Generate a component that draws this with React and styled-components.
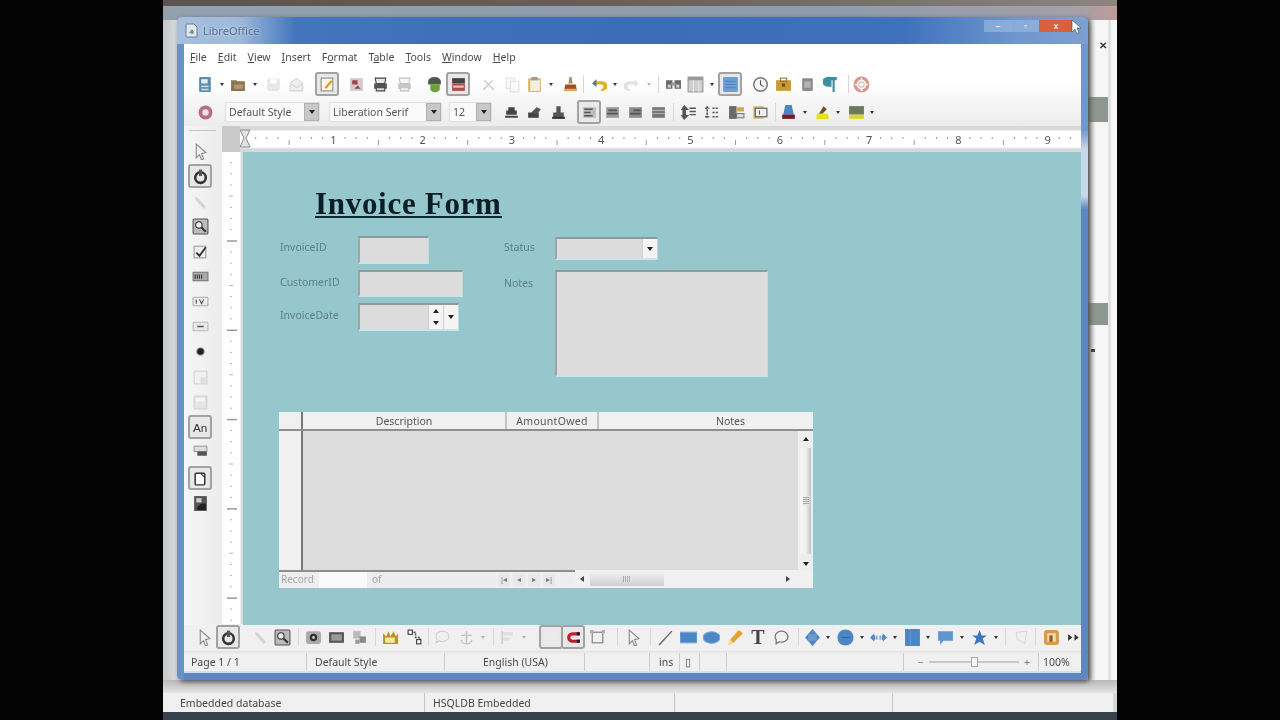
import React from "react";
import styled, { createGlobalStyle, css } from "styled-components";

const Global = createGlobalStyle`
  html, body { margin: 0; padding: 0; background: #000; }
  body { font-family: "Noto Sans", "Liberation Sans", sans-serif; overflow: hidden; }
`;

const Desktop = styled.div`
  width: 1280px;
  height: 720px;
  background: #030303;
  padding-left: 163px;
  box-sizing: border-box;
  filter: blur(0.7px);
  overflow: hidden;
`;

const BackWindow = styled.div`
  position: relative;
  width: 954px;
  height: 720px;
  display: flex;
  flex-direction: column;
  background: #d4d6d8;
`;
const BackTopStrip = styled.div`
  height: 6px;
  background: linear-gradient(90deg, #5b5350, #6a6058 50%, #77716c 75%, #8d8480);
`;
const BackTitle = styled.div`
  height: 14px;
  background: linear-gradient(90deg, #93a0ae, #8d9bad 70%, #a4a0a8 96%, #c09a98);
`;
const BackBody = styled.div`
  flex: 1;
  display: flex;
  justify-content: flex-end;
  background: linear-gradient(90deg, #c4c6c8, #dcdcdc 1.5%);
`;
const BackSide = styled.div`
  width: 29px;
  display: flex;
  flex-direction: column;
  background: linear-gradient(90deg, #9aa0a4 0, #d8d8d8 4px, #f6f6f6 8px, #f6f6f6 20px, #d8d8d8 21px, #f8f8f8 24px);
`;
const BackClose = styled.div`
  margin: 21px 0 0 11px;
  width: 9px;
  height: 9px;
  font: bold 10px/9px "Liberation Sans", sans-serif;
  color: #333;
`;
const BackBlock = styled.div`
  width: 20px;
  height: ${(p) => p.$h}px;
  margin-top: ${(p) => p.$top}px;
  background: #8e9690;
`;
const BackDot = styled.div`
  width: 4px;
  height: 3px;
  margin: 24px 0 0 3px;
  background: #444;
`;
const BackFooter = styled.div`
  height: 13px;
  background: linear-gradient(180deg, #b8b8b8, #e4e4e4);
`;
const BackStatus = styled.div`
  height: 19px;
  margin-right: 4px;
  display: flex;
  background: #f0f0f0;
  font-size: 10.5px;
  line-height: 21px;
  color: #444;
`;
const BackCell = styled.div`
  width: ${(p) => p.$w}px;
  padding-left: ${(p) => p.$pad || 0}px;
  box-sizing: border-box;
  border-right: 1px solid #c4c4c4;
`;
const BackBottom = styled.div`
  height: 8px;
  background: #37414c;
`;

const MainWindow = styled.div`
  position: absolute;
  left: 14px;
  top: 17px;
  width: 911px;
  height: 663px;
  box-sizing: border-box;
  padding: 0 7px 7px;
  display: flex;
  flex-direction: column;
  background: linear-gradient(90deg, #6a90c6 0, #6a90c6 7px, transparent 7px),
    linear-gradient(180deg, #7098d0 0, #7098d0 17%, #c8d8ea 20%, #c8d8ea 27%, #5d87bf 29%);
  border-radius: 5px;
  box-shadow: 2px 2px 5px rgba(30, 30, 30, 0.65);
`;
const TitleBar = styled.div`
  height: 27px;
  margin: 0 -7px;
  padding: 0 8px;
  display: flex;
  align-items: center;
  border-radius: 5px 5px 0 0;
  background: linear-gradient(90deg, #a7c0de 0, #9db9da 7%, #4375bd 13%, #3a6cb8 50%, #3f72bd 80%, #6f96ce 92%, #7da0d3 100%);
`;
const AppLogo = styled.svg`
  width: 13px;
  height: 15px;
  flex: none;
`;
const TitleText = styled.span`
  margin-left: 5px;
  font-size: 11px;
  color: #55708e;
  text-shadow: 0 0 3px #d8e6f4;
`;
const WinButtons = styled.div`
  margin-left: auto;
  margin-right: 7px;
  display: flex;
  height: 12px;
  align-self: flex-start;
  margin-top: 3px;
`;
const WinBtn = styled.div`
  width: ${(p) => p.$w}px;
  display: flex;
  align-items: center;
  justify-content: center;
  color: #f0f4f8;
  font: bold 9px "Liberation Sans", sans-serif;
  background: ${(p) => p.$bg};
`;
const Cursor = styled.svg`
  position: absolute;
  right: 6px;
  top: 2px;
  width: 11px;
  height: 16px;
`;

const Client = styled.div`
  flex: 1;
  display: flex;
  flex-direction: column;
  min-height: 0;
  background: #f0f0f0;
`;
const Header = styled.div`
  background: linear-gradient(180deg, #ffffff 0, #ffffff 45%, #ececec 100%);
`;
const MenuBar = styled.div`
  height: 26px;
  display: flex;
  align-items: center;
  padding-left: 6px;
  gap: 11px;
  font-size: 10.5px;
  color: #4a4a4a;
`;
const MenuItem = styled.span`
  u { text-underline-offset: 1px; }
`;
const ToolRow = styled.div`
  height: 28px;
  display: flex;
  align-items: center;
`;
const Tool = styled.span`
  flex: none;
  box-sizing: border-box;
  width: ${(p) => p.$w}px;
  height: 24px;
  margin-left: ${(p) => p.$gap}px;
  display: flex;
  align-items: center;
  justify-content: center;
  opacity: ${(p) => (p.$off ? 0.32 : 1)};
  ${(p) =>
    p.$on &&
    css`
      border: 2px solid #a2a2a2;
      border-radius: 3px;
      background: #e8e8e8;
    `}
`;
const Icon = styled.svg`
  width: 17px;
  height: 17px;
  display: block;
`;
const BigT = styled.span`
  font: bold 20px/20px "Liberation Serif", serif;
  color: #444;
`;
const Drop = styled.span`
  width: 0;
  height: 0;
  border-left: 2.5px solid transparent;
  border-right: 2.5px solid transparent;
  border-top: 3px solid #333;
`;
const Sep = styled.span`
  width: 1px;
  height: 18px;
  background: #d8d8d8;
`;
const Combo = styled.span`
  flex: none;
  box-sizing: border-box;
  width: ${(p) => p.$w}px;
  height: 20px;
  margin-left: ${(p) => p.$gap}px;
  display: flex;
  align-items: center;
  background: #fafafa;
  border: 1px solid #e0e0e0;
  font-size: 10.5px;
  color: #555;
`;
const ComboText = styled.span`
  flex: 1;
  padding-left: 3px;
  white-space: nowrap;
`;
const ComboArrow = styled.span`
  width: 15px;
  height: 18px;
  flex: none;
  display: flex;
  align-items: center;
  justify-content: center;
  background: #c8c8c8;
  border: 1px solid #b0b0b0;
  box-sizing: border-box;
`;
const ArrowDown = styled.span`
  width: 0;
  height: 0;
  border-left: 3px solid transparent;
  border-right: 3px solid transparent;
  border-top: 4px solid #222;
`;

const Workspace = styled.div`
  flex: 1;
  min-height: 0;
  display: flex;
`;
const SideBar = styled.div`
  width: 38px;
  flex: none;
  box-sizing: border-box;
  display: flex;
  flex-direction: column;
  align-items: flex-start;
  background: linear-gradient(90deg, #f6f6f6, #ececec);
`;
const SideGrip = styled.div`
  width: 27px;
  height: 1px;
  flex: none;
  margin: 4px 0 0 5px;
  background: #c4c4c4;
`;
const SideTool = styled(Tool)`
  margin-left: 4px;
  margin-top: ${(p) => p.$gap}px;
`;
const DocArea = styled.div`
  flex: 1;
  min-width: 0;
  display: flex;
  flex-direction: column;
`;
const RulerRow = styled.div`
  height: 26px;
  flex: none;
  display: flex;
  background: linear-gradient(180deg, #dadada 0, #dadada 4px, #ffffff 5px, #ffffff 21px, #d4dada 23px);
`;
const RulerCorner = styled.div`
  width: 18px;
  flex: none;
  background: #c9c9c9;
`;
const RulerSvg = styled.svg`
  flex: 1;
  min-width: 0;
  height: 26px;
  display: block;
`;
const Middle = styled.div`
  flex: 1;
  min-height: 0;
  display: flex;
`;
const VRuler = styled.svg`
  width: 21px;
  flex: none;
  height: 472px;
  display: block;
  background: linear-gradient(90deg, #ffffff 0, #ffffff 18px, #d8dcdc 19px);
`;
const Canvas = styled.div`
  position: relative;
  flex: 1;
  background: #96c7cd;
  overflow: hidden;
`;
const FormTitle = styled.div`
  position: absolute;
  left: 72px;
  top: 33px;
  height: 31px;
  font: bold 31px/38px "Liberation Serif", serif;
  letter-spacing: 0.7px;
  color: #0a1e26;
  white-space: nowrap;
  border-bottom: 2px solid #0a2a33;
`;
const FieldLabel = styled.span`
  position: absolute;
  left: ${(p) => p.$x}px;
  top: ${(p) => p.$y}px;
  font-size: 10.5px;
  line-height: 14px;
  color: #5d7f89;
`;
const Field = styled.div`
  position: absolute;
  left: ${(p) => p.$x}px;
  top: ${(p) => p.$y}px;
  width: ${(p) => p.$w}px;
  height: ${(p) => p.$h}px;
  box-sizing: border-box;
  display: flex;
  justify-content: flex-end;
  background: #dcdcdc;
  border-top: 2px solid #8f9a9c;
  border-left: 2px solid #9aa6a8;
  border-bottom: 2px solid #c8e6e8;
  border-right: 1px solid #c0dcde;
`;
const FieldBtn = styled.div`
  width: 14px;
  display: flex;
  flex-direction: column;
  align-items: center;
  justify-content: ${(p) => (p.$spin ? "space-around" : "center")};
  background: #f4f4f4;
  border-left: 1px solid #d0d0d0;
`;
const ArrowUp = styled.span`
  width: 0;
  height: 0;
  border-left: 3px solid transparent;
  border-right: 3px solid transparent;
  border-bottom: 4px solid #222;
`;

const Table = styled.div`
  position: absolute;
  left: 36px;
  top: 260px;
  width: 534px;
  height: 176px;
  display: flex;
  flex-direction: column;
  background: #eeeeee;
  font-size: 10.5px;
  color: #555;
`;
const TableHead = styled.div`
  height: 19px;
  flex: none;
  display: flex;
  box-sizing: border-box;
  border-bottom: 2px solid #8e8e8e;
  background: #f0f0f0;
`;
const HeadCell = styled.div`
  width: ${(p) => p.$w}px;
  flex: none;
  box-sizing: border-box;
  padding-left: ${(p) => p.$pad || 0}px;
  text-align: center;
  line-height: 19px;
  letter-spacing: ${(p) => p.$track || 0}px;
  border-right: ${(p) => (p.$last ? "none" : p.$dark ? "2px solid #777" : "2px solid #c4c4c4")};
`;
const TableMain = styled.div`
  flex: 1;
  display: flex;
  min-height: 0;
`;
const RowHeads = styled.div`
  width: 24px;
  flex: none;
  box-sizing: border-box;
  background: #f0f0f0;
  border-right: 2px solid #777;
`;
const TableBody = styled.div`
  flex: 1;
  background: #dddddd;
`;
const VScroll = styled.div`
  width: 15px;
  flex: none;
  display: flex;
  flex-direction: column;
  align-items: center;
  background: #eeeeee;
`;
const ScrollBtn = styled.div`
  height: 15px;
  width: 15px;
  flex: none;
  display: flex;
  align-items: center;
  justify-content: center;
`;
const VThumb = styled.div`
  flex: 1;
  width: 11px;
  margin: 2px 0;
  display: flex;
  align-items: center;
  justify-content: center;
  background: linear-gradient(90deg, #f6f6f6, #f0f0f0 50%, #c4c4c4);
`;
const Grip = styled.div`
  width: ${(p) => p.$w}px;
  height: ${(p) => p.$h}px;
  background: repeating-linear-gradient(${(p) => p.$dir}, #a8a8a8 0 1px, #e8e8e8 1px 2px);
`;
const TableFoot = styled.div`
  height: 16px;
  flex: none;
  display: flex;
  align-items: stretch;
  border-top: 2px solid #8e8e8e;
  margin-top: -1px;
  background: #eeeeee;
`;
const FootText = styled.span`
  width: ${(p) => p.$w}px;
  flex: none;
  padding-left: 2px;
  box-sizing: border-box;
  line-height: 15px;
  color: #a6a6a6;
  font-size: 10px;
  background: ${(p) => p.$bg || "transparent"};
`;
const FootInput = styled.span`
  width: 48px;
  flex: none;
  background: #fafafa;
  margin: 0 3px;
`;
const NavBtns = styled.div`
  width: 79px;
  flex: none;
  display: flex;
  padding-left: 2px;
  gap: 3px;
  box-sizing: border-box;
  align-items: center;
`;
const NavBtn = styled.span`
  width: 12px;
  height: 12px;
  font: 8px/12px "Liberation Sans", sans-serif;
  text-align: center;
  color: #777;
  background: #e8e8e8;
`;
const HScroll = styled.div`
  flex: 1;
  display: flex;
  align-items: center;
  margin-top: -2px;
  background: #f0f0f0;
`;
const HArrow = styled.span`
  width: 0;
  height: 0;
  flex: none;
  margin: ${(p) => p.$m};
  border-top: 3px solid transparent;
  border-bottom: 3px solid transparent;
  ${(p) => (p.$left ? "border-right: 4px solid #444;" : "border-left: 4px solid #444;")}
`;
const HThumb = styled.div`
  width: 74px;
  height: 13px;
  flex: none;
  display: flex;
  align-items: center;
  justify-content: center;
  background: linear-gradient(180deg, #efefef, #cfcfcf);
`;

const BottomBar = styled.div`
  height: 26px;
  flex: none;
  box-sizing: border-box;
  padding-bottom: 2px;
  display: flex;
  align-items: center;
  background: #f0f0f0;
  overflow: hidden;
`;
const StatusBar = styled.div`
  height: 22px;
  flex: none;
  display: flex;
  align-items: center;
  box-sizing: border-box;
  background: linear-gradient(180deg, #e0e0e0 0, #f0f0f0 3px, #f0f0f0 20px, #d0dff0 20px);
  font-size: 10.5px;
  color: #4a4a4a;
`;
const StatusCell = styled.div`
  width: ${(p) => p.$w}px;
  height: 18px;
  flex: none;
  box-sizing: border-box;
  line-height: 18px;
  padding-left: ${(p) => p.$pad || 0}px;
  border-right: ${(p) => (p.$last ? "none" : "1px solid #cccccc")};
  white-space: nowrap;
`;
const Zoomer = styled.div`
  width: 135px;
  height: 18px;
  flex: none;
  display: flex;
  align-items: center;
  box-sizing: border-box;
  padding-left: 14px;
  gap: 5px;
  color: #777;
  border-right: 1px solid #cccccc;
`;
const SliderTrack = styled.div`
  width: 90px;
  height: 2px;
  flex: none;
  display: flex;
  align-items: center;
  justify-content: center;
  background: #c8c8c8;
`;
const SliderKnob = styled.div`
  width: 5px;
  height: 8px;
  background: #f4f4f4;
  border: 1px solid #a8a8a8;
`;

const S = ({ children }) => (
  <Icon viewBox="0 0 16 16" aria-hidden="true">
    {children}
  </Icon>
);

const GLYPHS = {
  doc: <><rect x="2" y="1" width="11" height="14" rx="1" fill="#5d8cad" /><rect x="4" y="3" width="6" height="4" fill="#e8f0f4" /><rect x="4" y="9" width="7" height="1.5" fill="#c7dbe6" /><rect x="4" y="12" width="7" height="1.5" fill="#c7dbe6" /></>,
  folder: <><path d="M1 4h5l1 1h7v9H1z" fill="#8f7450" /><rect x="4" y="8" width="8" height="4" fill="#b49a6e" /></>,
  save: <><rect x="2" y="2" width="12" height="12" rx="2" fill="#bcbcbc" /><rect x="5" y="3" width="6" height="4" fill="#fff" /></>,
  mail: <><path d="M2 7l6-5 6 5v7H2z" fill="#d0d0d0" stroke="#888" /><path d="M2 7l6 4 6-4" fill="none" stroke="#888" /></>,
  edit: <><rect x="2" y="2" width="11" height="12" fill="#fbf6e6" stroke="#888" /><path d="M5 11l6-7 2 1-6 7z" fill="#e09a28" /></>,
  pdf: <><rect x="2" y="2" width="12" height="12" fill="#d8c8cc" /><rect x="4" y="4" width="5" height="4" fill="#a04050" /><path d="M6 12l3-3 3 3z" fill="#8a4a58" /></>,
  print: <><path d="M3 2h10l-1 5H4z" fill="#e8e8e8" stroke="#444" /><path d="M2 7h12v5H2z" fill="#555" /><path d="M4 11h8v3H4z" fill="#ddd" stroke="#444" /></>,
  spell: <><path d="M2 5a6 4 0 0 1 12 0v3H2z" fill="#4a5a44" /><path d="M4 8h9v4a4 3 0 0 1-9 0z" fill="#6ea03a" /></>,
  book: <><rect x="2" y="2" width="12" height="5" fill="#444" /><rect x="2" y="7" width="12" height="7" fill="#b2494a" /><rect x="3" y="9" width="10" height="2" fill="#e8c8c8" /></>,
  cut: <><path d="M3 13l9-9M13 13L4 4" stroke="#777" strokeWidth="1.6" fill="none" /></>,
  copy: <><rect x="2" y="2" width="8" height="10" fill="#eee" stroke="#aaa" /><rect x="6" y="5" width="8" height="10" fill="#f4f4f4" stroke="#aaa" /></>,
  paste: <><rect x="2" y="2" width="12" height="13" rx="1" fill="#d8b860" /><rect x="4" y="4" width="9" height="10" fill="#f4efe0" /><rect x="5" y="1" width="6" height="3" fill="#999" /></>,
  brush: <><path d="M7 1h2l1 6H6z" fill="#b08860" /><path d="M3 8h10l1 6H2z" fill="#9a5028" /><rect x="2" y="12" width="12" height="2" fill="#e8b050" /></>,
  undo: <><path d="M6 3L2 7l4 3V8h4a2 2 0 0 1 1 4l-1 2a5 4 0 0 0 2-9H6z" fill="#e0b020" /><path d="M6 3L2 7l4 3" fill="#4a78b0" /></>,
  redo: <path d="M10 3l4 4-4 3V8H6a2 2 0 0 0-1 4l1 2a5 4 0 0 1-2-9h6z" fill="#aaa" />,
  find: <><rect x="1" y="4" width="6" height="8" fill="#666" /><rect x="9" y="4" width="6" height="8" fill="#666" /><rect x="6" y="6" width="4" height="3" fill="#999" /><rect x="2.5" y="8" width="3" height="3" fill="#ccd" /><rect x="10.5" y="8" width="3" height="3" fill="#ccd" /></>,
  table: <><rect x="1" y="1" width="14" height="14" fill="#cfcfcf" stroke="#999" /><rect x="1" y="1" width="14" height="3" fill="#999" /><path d="M6 4v11M11 4v11" stroke="#e8e8e8" /></>,
  formbox: <><rect x="1" y="1" width="14" height="14" rx="1" fill="#6d9fd6" /><path d="M3 5h10M3 8h10M3 11h10" stroke="#4a7db8" strokeWidth="0.8" /></>,
  clock: <><circle cx="8" cy="8" r="6.4" fill="#f4f4f4" stroke="#777" strokeWidth="1.4" /><path d="M8 4v4l3 2" stroke="#555" fill="none" /></>,
  case: <><rect x="1" y="4" width="14" height="10" fill="#c89a38" /><rect x="5" y="2" width="6" height="3" fill="none" stroke="#96742a" /><rect x="6.5" y="7" width="3" height="3" fill="#6a4f18" /></>,
  cube: <><rect x="3" y="2" width="10" height="12" rx="1" fill="#8c8c8c" /><rect x="5" y="5" width="6" height="6" fill="#b4b4b4" /></>,
  pilcrow: <><path d="M4 1h9v3h-2v11H9V4H8v6H6a5 4 0 0 1-2-9z" fill="#3b8ea8" /></>,
  help: <><circle cx="8" cy="8" r="6" fill="#fff" stroke="#d89890" strokeWidth="3" /><path d="M8 2v3M8 11v3M2 8h3M11 8h3" stroke="#fff" strokeWidth="1.6" /><circle cx="8" cy="8" r="2.5" fill="#fff" stroke="#e0b8b0" /></>,
  navi: <><circle cx="8" cy="8" r="6.5" fill="#b56e80" /><circle cx="8" cy="8" r="3" fill="#f0e0e4" /></>,
  bold1: <><path d="M2 13h12v-2H2zM3 10h10V6h-2V3H5v3H3z" fill="#444" /></>,
  bold2: <><path d="M2 13h10V8H2z" fill="#444" /><path d="M5 8l5-5 4 2-4 5z" fill="#555" /></>,
  bold3: <><path d="M6 2h4v6h3v5H3V8h3z" fill="#555" /><rect x="2" y="12" width="12" height="2" fill="#333" /></>,
  alL: <><rect x="2" y="3" width="12" height="10" fill="#bcbcbc" /><path d="M3 5h8M3 8h6M3 11h8" stroke="#555" strokeWidth="1.4" /></>,
  alC: <><rect x="2" y="3" width="12" height="10" fill="#9a9a9a" /><path d="M4 6h8M3 9h10" stroke="#555" strokeWidth="1.6" /></>,
  alR: <><rect x="2" y="3" width="12" height="10" fill="#8c8c8c" /><path d="M6 6h7M3 9h10" stroke="#555" strokeWidth="1.6" /></>,
  alJ: <><rect x="2" y="3" width="12" height="10" fill="#777" /><path d="M2 6h12M2 9h12" stroke="#b0b0b0" /></>,
  ind1: <><path d="M3 2l3 3H4v6h2l-3 3-2-3h1V5H1zM8 4h6M8 7h6M8 10h6" stroke="#555" strokeWidth="1.4" fill="#555" /></>,
  ind2: <><path d="M3 2v12M1 4h4M1 12h4M8 4h6M8 8h6M8 12h6" stroke="#555" strokeWidth="1.6" strokeDasharray="2 1" fill="none" /></>,
  ind3: <><rect x="1" y="2" width="7" height="12" fill="#6a6a6a" /><rect x="8" y="3" width="7" height="4" fill="#c9a860" /><rect x="8" y="9" width="7" height="4" fill="#ddd" stroke="#777" /></>,
  ind4: <><rect x="2" y="2" width="10" height="12" fill="#d8c078" /><rect x="4" y="4" width="11" height="8" fill="#eee" stroke="#555" /><path d="M8 6v4" stroke="#555" /></>,
  fontColor: <><path d="M5 1h6l2 9H3z" fill="#4a86c0" /><rect x="2" y="10" width="12" height="4" fill="#7a1a2a" /></>,
  highlight: <><path d="M9 2l3 3-5 5H4z" fill="#6a5020" /><path d="M3 9l10 0 1 5H2z" fill="#e8e020" /></>,
  bgColor: <><rect x="1" y="2" width="14" height="8" fill="#6a7a5a" /><rect x="1" y="10" width="14" height="4" fill="#d8d830" /></>,
  arrow: <path d="M4 1l9 8-4 1 2 5-2 1-2-5-3 3z" fill="#f0f0f0" stroke="#888" />,
  hand: <><circle cx="8" cy="9" r="5" fill="none" stroke="#333" strokeWidth="2.4" /><rect x="6.5" y="1.5" width="3" height="6" fill="#555" /></>,
  wrench: <path d="M3 3l2 0 8 9-2 2-8-9z" fill="#999" />,
  zoom: <><rect x="1" y="1" width="14" height="14" rx="1" fill="#bbb" stroke="#555" /><circle cx="6.5" cy="6.5" r="3" fill="#eee" stroke="#333" /><path d="M9 9l4 4" stroke="#333" strokeWidth="2" /></>,
  check: <><rect x="2" y="3" width="11" height="11" fill="#eee" stroke="#999" /><path d="M4 9l3 3 6-8" stroke="#333" strokeWidth="1.8" fill="none" /></>,
  text: <><rect x="1" y="4" width="14" height="8" fill="#aaa" stroke="#777" /><path d="M3 6v4M5 6v4M7 6v4M9 6v4" stroke="#333" /></>,
  okBtn: <><rect x="1" y="4" width="14" height="8" rx="1" fill="#eee" stroke="#aaa" /><path d="M4 6v4M7 6l2 4 2-4" stroke="#444" fill="none" /></>,
  btn: <><rect x="1" y="4" width="14" height="8" rx="1" fill="#e8e8e8" stroke="#bbb" /><path d="M5 8h6" stroke="#555" strokeWidth="1.4" /></>,
  radio: <circle cx="8" cy="8" r="3.6" fill="#222" stroke="#aaa" />,
  panel: <><rect x="2" y="2" width="12" height="12" fill="#eee" stroke="#888" /><rect x="8" y="8" width="5" height="5" fill="#bbb" /></>,
  panel2: <><rect x="2" y="2" width="12" height="12" fill="#ccc" stroke="#888" /><rect x="4" y="4" width="8" height="3" fill="#fff" /></>,
  an: <text x="1" y="12" fontSize="11" fontFamily="Liberation Sans" fill="#333">An</text>,
  grid: <><rect x="2" y="3" width="12" height="5" fill="#ddd" stroke="#999" /><rect x="5" y="8" width="9" height="4" fill="#555" /></>,
  pageDoc: <><rect x="3" y="3" width="9" height="11" rx="1" fill="#fff" stroke="#333" strokeWidth="1.4" /><path d="M8 3l4 4" stroke="#333" /></>,
  darkDoc: <><rect x="2" y="1" width="12" height="14" fill="#555" /><rect x="4" y="3" width="5" height="4" fill="#ccc" /><path d="M9 8h4v6H5v-3z" fill="#222" /></>,
  gear: <><rect x="1" y="2" width="14" height="12" rx="2" fill="#aaa" /><circle cx="8" cy="8" r="3.5" fill="#333" /><circle cx="8" cy="8" r="1.4" fill="#ccc" /></>,
  screen: <><rect x="1" y="3" width="14" height="10" fill="#555" /><rect x="3" y="5" width="10" height="6" fill="#999" /></>,
  tiles: <><rect x="2" y="2" width="7" height="7" fill="#bbb" /><rect x="8" y="7" width="6" height="6" fill="#888" /><rect x="4" y="10" width="4" height="4" fill="#999" /></>,
  hat: <><path d="M1 14V4l3 3 2-5 2 5 3-5 2 5 2-3v10z" fill="#b8941c" /><rect x="3" y="8" width="9" height="5" fill="#f0e4a8" /></>,
  nodes: <><path d="M4 3h5v5h4v6" fill="none" stroke="#555" strokeDasharray="2 1" strokeWidth="1.4" /><rect x="2" y="1" width="4" height="4" fill="#fff" stroke="#333" /><rect x="10" y="10" width="4" height="4" fill="#fff" stroke="#333" /></>,
  bubble: <path d="M2 7a6 5 0 0 1 12 0 6 5 0 0 1-9 4l-3 2 1-3a5 5 0 0 1-1-3z" fill="none" stroke="#888" />,
  anchor: <path d="M8 2v12M3 6h10M3 10a5 4 0 0 0 10 0" fill="none" stroke="#666" strokeWidth="1.4" />,
  alignObj: <><path d="M3 2v12" stroke="#888" strokeWidth="1.5" /><rect x="4" y="3" width="9" height="3" fill="#bbb" /><rect x="4" y="8" width="6" height="3" fill="#bbb" /></>,
  blank: <rect x="1" y="1" width="14" height="14" fill="#eaeaea" />,
  magnet: <><path d="M14 3H7a5 5 0 0 0 0 10h7v-3H7a2 2 0 0 1 0-4h7z" fill="#c01c2c" /><rect x="11" y="3" width="3" height="3" fill="#222" /><rect x="11" y="10" width="3" height="3" fill="#222" /></>,
  frame: <><rect x="3" y="3" width="10" height="10" fill="none" stroke="#777" /><rect x="1" y="1" width="3" height="3" fill="#aaa" /><rect x="12" y="1" width="3" height="3" fill="#aaa" /></>,
  line: <path d="M2 15L14 2" stroke="#666" strokeWidth="1.3" />,
  rect: <rect x="0" y="3" width="16" height="10" fill="#4d86c4" stroke="#7aa6d8" />,
  ellipse: <ellipse cx="8" cy="8" rx="8" ry="5.5" fill="#4d86c4" stroke="#7aa6d8" />,
  pencil: <><path d="M1 15l2-5 8-9 4 3-9 9z" fill="#e6a030" /><path d="M1 15l2-5 3 3z" fill="#f0e090" /></>,
  callout: <path d="M2 7a6 5 0 0 1 12 0 6 5 0 0 1-8 5l-3 2v-4a5 5 0 0 1-1-3z" fill="#f0f0f0" stroke="#777" strokeWidth="1.2" />,
  diamond: <><path d="M8 0l7 8-7 8-7-8z" fill="#4d86c4" /><rect x="4" y="5" width="8" height="6" fill="#6a9ad0" /></>,
  circle: <><circle cx="8" cy="8" r="7.6" fill="#4d86c4" /><path d="M4 8h8" stroke="#2f68a8" /></>,
  arrows: <path d="M0 8l4-4v2h1v4H4v2zM16 8l-4-4v2h-1v4h1v2zM6 6h1v4H6zM9 6h1v4H9z" fill="#5b8ac0" />,
  fc: <><rect x="1" y="0" width="14" height="16" fill="#4d86c4" /><path d="M6 0v16" stroke="#6a9ad0" /></>,
  speech: <path d="M1 2h14v9H6l-3 4v-4H1z" fill="#5f96d2" />,
  star: <path d="M8 1l2 5h5l-4 3 2 6-5-3-5 3 2-6-4-3h5z" fill="#3a76b8" />,
  points: <path d="M3 3l10-1-2 12-4-3-3-1z" fill="#f4f4f4" stroke="#aaa" />,
  orange: <><rect x="1" y="1" width="14" height="14" rx="3" fill="#d49a50" /><rect x="4" y="4" width="8" height="8" fill="#f0dca8" /><rect x="6" y="6" width="3" height="6" fill="#8a5a20" /></>,
  more: <path d="M2 5l4 3-4 3zM8 5l4 3-4 3z" fill="#333" />,
};

const SMALL = { drop: 5, sep: 1 };

// gaps come from the icon centres so the rows keep the reference spacing
function layoutRow(items, startX) {
  let edge = startX;
  return items.map((item) => {
    const w = item.w || SMALL[item.k] || (item.on ? 24 : 20);
    const gap = item.c - w / 2 - edge;
    edge = item.c + w / 2;
    return { ...item, w, gap };
  });
}

const it = (k, c, extra) => ({ k, c, ...extra });
const off = { off: true };
const on = { on: true };

const TOP_ROW = [
  it("doc", 205), it("drop", 222), it("folder", 238), it("drop", 255), it("save", 273, off), it("mail", 296, off),
  it("edit", 327, on), it("pdf", 356), it("print", 380), it("print", 404, off), it("spell", 434), it("book", 458, on),
  it("cut", 488, off), it("copy", 512, off), it("paste", 534), it("drop", 551), it("brush", 570), it("sep", 583),
  it("undo", 598), it("drop", 615), it("redo", 632, off), it("drop", 649, off), it("sep", 658), it("find", 673),
  it("table", 695), it("drop", 712), it("formbox", 730, on), it("clock", 760), it("case", 783), it("cube", 807),
  it("pilcrow", 831), it("sep", 848), it("help", 861),
];
const FORMAT_ROW = [
  it("navi", 205),
  it("combo", 272.5, { w: 95, label: "Default Style" }),
  it("combo", 385.5, { w: 113, label: "Liberation Serif" }),
  it("combo", 470.5, { w: 43, label: "12" }),
  it("bold1", 511), it("bold2", 534), it("bold3", 558), it("alL", 589, on), it("alC", 612), it("alR", 635), it("alJ", 658),
  it("sep", 673), it("ind1", 689), it("ind2", 712), it("ind3", 736), it("ind4", 759), it("sep", 775), it("fontColor", 788),
  it("drop", 805), it("highlight", 822), it("drop", 838), it("bgColor", 856), it("drop", 872),
];
const BOTTOM_ROW = [
  it("arrow", 204), it("hand", 228, on), it("wrench", 260, off), it("zoom", 282), it("sep", 298), it("gear", 313), it("screen", 336),
  it("tiles", 359), it("sep", 375), it("hat", 390), it("nodes", 414), it("sep", 428), it("bubble", 442, off), it("anchor", 466, off),
  it("drop", 483, off), it("sep", 493), it("alignObj", 507, off), it("drop", 524, off), it("blank", 551, on), it("magnet", 573, on),
  it("frame", 597), it("sep", 617), it("arrow", 633), it("sep", 650), it("line", 665), it("rect", 688), it("ellipse", 711),
  it("pencil", 735), it("tee", 758), it("callout", 781), it("sep", 798), it("diamond", 812), it("drop", 828), it("circle", 845),
  it("drop", 862), it("arrows", 878), it("drop", 895), it("fc", 912), it("drop", 928), it("speech", 945), it("drop", 962),
  it("star", 979), it("drop", 996), it("sep", 1005), it("points", 1021, off), it("sep", 1035), it("orange", 1051), it("more", 1074),
];
const SIDE = [
  ["arrow", 8], ["hand", 1, true], ["wrench", 2, false, true], ["zoom", 0], ["check", 1], ["text", 1], ["okBtn", 1], ["btn", 1],
  ["radio", 1], ["panel", 2, false, true], ["panel2", 1, false, true], ["an", 1, true], ["grid", 0], ["pageDoc", 3, true], ["darkDoc", 1],
];
const MENUS = [
  ["", "F", "ile"], ["", "E", "dit"], ["", "V", "iew"], ["", "I", "nsert"], ["F", "o", "rmat"], ["T", "a", "ble"], ["", "T", "ools"], ["", "W", "indow"], ["", "H", "elp"],
];

function Row({ items, start }) {
  return layoutRow(items, start).map((item, i) => {
    if (item.k === "combo") {
      return (
        <Combo key={i} $w={item.w} $gap={item.gap}>
          <ComboText>{item.label}</ComboText>
          <ComboArrow><ArrowDown /></ComboArrow>
        </Combo>
      );
    }
    let face = <S>{GLYPHS[item.k]}</S>;
    if (item.k === "drop") face = <Drop />;
    if (item.k === "sep") face = <Sep />;
    if (item.k === "tee") face = <BigT>T</BigT>;
    return (
      <Tool key={i} $w={item.w} $gap={item.gap} $on={item.on} $off={item.off}>
        {face}
      </Tool>
    );
  });
}

function HorizontalRuler() {
  const ticks = [];
  for (let i = -1; i < 80; i++) {
    const x = 4 + i * 11.16;
    const major = i % 8 === 0;
    const half = i % 4 === 0;
    if (!major) ticks.push(<rect key={i} x={x} y={half ? 14 : 11} width="1" height={half ? 5 : 2} fill="#999" />);
  }
  return (
    <RulerSvg viewBox="0 0 841 26" preserveAspectRatio="none">
      {ticks}
      {[1, 2, 3, 4, 5, 6, 7, 8, 9].map((n) => (
        <text key={n} x={4 + n * 89.3} y="18" textAnchor="middle" fontSize="11" fontFamily="Noto Sans" fill="#555">{n}</text>
      ))}
      <path d="M0 4h10l-4 8 4 9H0l4-9z" fill="#e4e4e4" stroke="#888" />
    </RulerSvg>
  );
}

function VerticalRuler() {
  const ticks = [];
  for (let i = 0; i < 44; i++) {
    const y = -1 + i * 11.16;
    const major = i % 8 === 0 && i > 0;
    const half = i % 4 === 0;
    ticks.push(
      <rect key={i} x={major ? 5 : half ? 7 : 8} y={y} width={major ? 10 : half ? 4 : 2} height={major ? 1.5 : 1} fill={major ? "#999" : "#b4b4b4"} />
    );
  }
  return <VRuler viewBox="0 0 21 472">{ticks}</VRuler>;
}

export default function App() {
  return (
    <Desktop>
      <Global />
      <BackWindow>
        <BackTopStrip />
        <BackTitle />
        <BackBody>
          <BackSide>
            <BackClose>✕</BackClose>
            <BackBlock $top={47} $h={25} />
            <BackBlock $top={181} $h={22} />
            <BackDot />
          </BackSide>
        </BackBody>
        <BackFooter />
        <BackStatus>
          <BackCell $w={262} $pad={17}>Embedded database</BackCell>
          <BackCell $w={250} $pad={8}>HSQLDB Embedded</BackCell>
          <BackCell $w={218} />
        </BackStatus>
        <BackBottom />

        <MainWindow>
          <TitleBar>
            <AppLogo viewBox="0 0 13 15">
              <path d="M1 1h8l3 3v10H1z" fill="#dfe8f0" stroke="#6f7f90" />
              <path d="M4 10l3-4 2 3-1 2z" fill="#6a9a80" />
            </AppLogo>
            <TitleText>LibreOffice</TitleText>
            <WinButtons>
              <WinBtn $w={28} $bg="rgba(190,210,235,0.4)">–</WinBtn>
              <WinBtn $w={27} $bg="rgba(190,210,235,0.35)">▫</WinBtn>
              <WinBtn $w={34} $bg="#d8603a">x</WinBtn>
            </WinButtons>
            <Cursor viewBox="0 0 11 16">
              <path d="M1 1v12l3-3 2 5 2-1-2-5h4z" fill="#fff" stroke="#444" strokeWidth="0.6" />
            </Cursor>
          </TitleBar>
          <Client>
            <Header>
              <MenuBar>
                {MENUS.map(([lead, mark, rest], i) => (
                  <MenuItem key={i}>{lead}<u>{mark}</u>{rest}</MenuItem>
                ))}
              </MenuBar>
              <ToolRow><Row items={TOP_ROW} start={184} /></ToolRow>
              <ToolRow><Row items={FORMAT_ROW} start={184} /></ToolRow>
            </Header>
            <Workspace>
              <SideBar>
                <SideGrip />
                {SIDE.map(([k, gap, active, disabled], i) => (
                  <SideTool key={i} $w={24} $gap={gap} $on={active} $off={disabled}>
                    <S>{GLYPHS[k]}</S>
                  </SideTool>
                ))}
              </SideBar>
              <DocArea>
                <RulerRow>
                  <RulerCorner />
                  <HorizontalRuler />
                </RulerRow>
                <Middle>
                  <VerticalRuler />
                  <Canvas>
                    <FormTitle>Invoice Form</FormTitle>
                    <FieldLabel $x={37} $y={88}>InvoiceID</FieldLabel>
                    <FieldLabel $x={37} $y={123}>CustomerID</FieldLabel>
                    <FieldLabel $x={37} $y={156}>InvoiceDate</FieldLabel>
                    <FieldLabel $x={261} $y={88}>Status</FieldLabel>
                    <FieldLabel $x={261} $y={124}>Notes</FieldLabel>
                    <Field $x={115} $y={84} $w={71} $h={28} />
                    <Field $x={115} $y={118} $w={105} $h={27} />
                    <Field $x={115} $y={151} $w={101} $h={28}>
                      <FieldBtn $spin><ArrowUp /><ArrowDown /></FieldBtn>
                      <FieldBtn><ArrowDown /></FieldBtn>
                    </Field>
                    <Field $x={312} $y={85} $w={103} $h={23}>
                      <FieldBtn><ArrowDown /></FieldBtn>
                    </Field>
                    <Field $x={312} $y={118} $w={213} $h={107} />
                    <Table>
                      <TableHead>
                        <HeadCell $w={24} $dark />
                        <HeadCell $w={204}>Description</HeadCell>
                        <HeadCell $w={92} $track={0.3}>AmountOwed</HeadCell>
                        <HeadCell $w={214} $last $pad={49}>Notes</HeadCell>
                      </TableHead>
                      <TableMain>
                        <RowHeads />
                        <TableBody />
                        <VScroll>
                          <ScrollBtn><ArrowUp /></ScrollBtn>
                          <VThumb><Grip $w={6} $h={8} $dir="180deg" /></VThumb>
                          <ScrollBtn><ArrowDown /></ScrollBtn>
                        </VScroll>
                      </TableMain>
                      <TableFoot>
                        <FootText $w={37}>Record</FootText>
                        <FootInput />
                        <FootText $w={126} $bg="#ececec">of</FootText>
                        <NavBtns>
                          <NavBtn>|◂</NavBtn>
                          <NavBtn>◂</NavBtn>
                          <NavBtn>▸</NavBtn>
                          <NavBtn>▸|</NavBtn>
                        </NavBtns>
                        <HScroll>
                          <HArrow $left $m="0 6px 0 5px" />
                          <HThumb><Grip $w={8} $h={6} $dir="90deg" /></HThumb>
                          <HArrow $m="0 0 0 122px" />
                        </HScroll>
                      </TableFoot>
                    </Table>
                  </Canvas>
                </Middle>
              </DocArea>
            </Workspace>
            <BottomBar><Row items={BOTTOM_ROW} start={184} /></BottomBar>
            <StatusBar>
              <StatusCell $w={123} $pad={7}>Page 1 / 1</StatusCell>
              <StatusCell $w={138} $pad={8}>Default Style</StatusCell>
              <StatusCell $w={140} $pad={38}>English (USA)</StatusCell>
              <StatusCell $w={65} />
              <StatusCell $w={30} $pad={9}>ins</StatusCell>
              <StatusCell $w={20} $pad={5}>▯</StatusCell>
              <StatusCell $w={27} />
              <StatusCell $w={177} />
              <Zoomer>−<SliderTrack><SliderKnob /></SliderTrack>+</Zoomer>
              <StatusCell $w={39} $pad={4} $last>100%</StatusCell>
            </StatusBar>
          </Client>
        </MainWindow>
      </BackWindow>
    </Desktop>
  );
}
